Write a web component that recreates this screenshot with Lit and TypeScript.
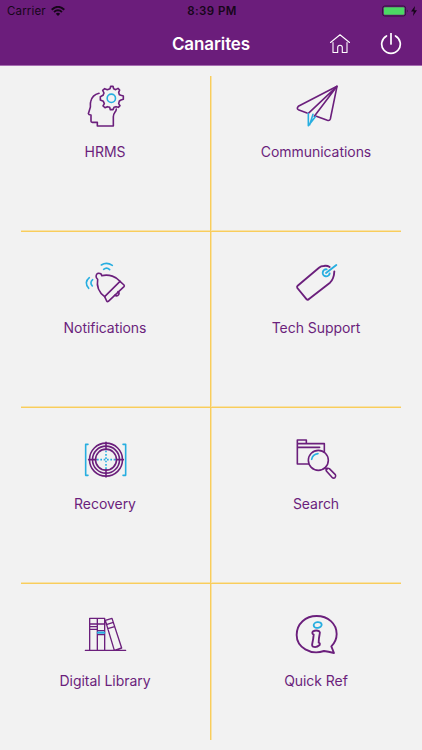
import { LitElement, html, css, svg } from "lit";
import { customElement, property } from "lit/decorators.js";

const box = (x: number, y: number) => `${x} ${y} 144 144`;

const icons: Record<string, { view: string; art: unknown }> = {
  hrms: {
    view: box(33, 18),
    art: svg`
      <path d="M87 52C74 55 65 64 62 77C60 84 62 89 61 94L55 113Q56 117 63 117V136Q63 139 67 139H82V150H130V122Q130 115 134 110Q139 105 139 99"/>
      <path d="M120 38L122 31H129L131 38L137 41L144 37L149 42L146 49L148 56L153 58L160 60V70L153 72L148 75L146 83L150 89L145 94L138 92L132 94L129 101H121L119 94L112 92L105 95L99 90L103 83L100 76L91 72V62L99 58L102 51L98 43L104 38L112 41Z"/>
      <circle class="cyan" cx="124" cy="67" r="12.5"/>`,
  },
  communications: {
    view: box(111, 18),
    art: svg`
      <path d="M156 111L130 101Q124 97 130 91L246 31L226 129Q224 135 217 133L184 121"/>
      <path d="M246 31L160 112M246 31L178 121"/>
      <path class="cyan" d="M160 113V149L181 122M164 146L174 115"/>`,
  },
  notifications: {
    view: box(63, 12),
    art: svg`
      <path d="M134 128L180 82L192 93Q194 96 192 98L145 142Q142 144 140 141Z"/>
      <path d="M134 128C118 116 109 99 113 76C106 71 107 60 114 58C121 57 125 60 125 65C148 60 169 68 180 82"/>
      <path d="M164 124Q172 128 176 122Q179 116 174 113"/>
      <path class="cyan" d="M124 33Q140 23 157 34M131 46Q140 38 149 47M88 71Q71 85 86 103M98 77Q88 86 97 96"/>`,
  },
  support: {
    view: box(81, 12),
    art: svg`
      <path class="bold" d="M194 39Q186 34 176 36Q168 36 162 41L98 95Q95 98 97 102L125 136Q128 139 132 135L195 86Q207 75 208 52"/>
      <path class="cyan bold" d="M183 57L214 33M185 46A10.500 10.500 0 1 0 194 58"/>`,
  },
  recovery: {
    view: box(33, 12),
    art: svg`
      <circle cx="108" cy="89" r="49.500"/>
      <circle cx="108" cy="89" r="40.500"/>
      <circle cx="108" cy="89" r="31.500"/>
      <path d="M56 89H78M138 89H160M108 37V59M108 119V141"/>
      <path class="cyan dash" d="M81 89H136M108 62V117"/>
      <path class="cyan" d="M54 43H47V136H54M159 43H167V136H159"/>`,
  },
  search: {
    view: box(36, 12),
    art: svg`
      <path d="M86 102H52V30H79V41H133V66M52 41H79M52 52H119"/>
      <circle cx="115" cy="91" r="30"/>
      <path class="cyan" d="M95 88Q98 73 114 71"/>
      <path d="M136 113L141 118M139 123Q136 117 142 115Q145 114 148 116L166 134Q169 139 165 143Q161 146 156 142Z"/>`,
  },
  library: {
    view: box(78, 15),
    art: svg`
      <path class="fine" d="M91 133H212M104 133V37H149V133M127 37V133M104 54H149M104 62H127M104 70H127M127 74H149M127 86H149M151 43L171 37L200 126L178 133ZM154 56L175 49M158 68L179 62"/>
      <path class="cyan" d="M129 80H147" stroke-width="7"/>`,
  },
  info: {
    view: box(36, 15),
    art: svg`
      <path class="bold" d="M154 121L162 141Q144 137 132 135C92 149 50 124 50 87C50 53 77 30 110 30C144 30 170 53 170 84Q170 105 154 121Z"/>
      <ellipse class="cyan bold" cx="113" cy="57" rx="12" ry="8.500" transform="rotate(-8 113 57)"/>
      <path class="bold" d="M99 76Q109 71 118 76Q121 79 119 84Q116 98 116 110Q121 111 119 117Q109 126 99 122Q95 120 97 112Q100 99 101 86Q94 82 99 76Z"/>`,
  },
};

@customElement("menu-tile")
class MenuTile extends LitElement {
  @property() icon = "";
  @property() label = "";

  static styles = css`
    :host { display: flex; flex-direction: column; align-items: center; }
    .icon {
      width: 48px; height: 48px; flex: none; fill: none; stroke: #6b1f7c;
      stroke-width: 4.8; stroke-linecap: round; stroke-linejoin: round;
    }
    .bold { stroke-width: 5.6; }
    .fine { stroke-width: 4; }
    .cyan { stroke: #27aee0; }
    .dash { stroke-dasharray: 5 5; stroke-linecap: butt; }
    .label {
      margin-top: 12px; font-size: 14px; line-height: 20px;
      letter-spacing: -0.05px; color: #6b1f7c; white-space: nowrap;
    }
  `;

  render() {
    const icon = icons[this.icon];
    return html`
      <svg class="icon" viewBox=${icon.view}>${icon.art}</svg>
      <span class="label">${this.label}</span>
    `;
  }
}

const tiles = [
  ["hrms", "HRMS"],
  ["communications", "Communications"],
  ["notifications", "Notifications"],
  ["support", "Tech Support"],
  ["recovery", "Recovery"],
  ["search", "Search"],
  ["library", "Digital Library"],
  ["info", "Quick Ref"],
];

@customElement("app-root")
class AppRoot extends LitElement {
  static styles = css`
    :host {
      display: flex; flex-direction: column; height: 750px; overflow: hidden;
      background: #f2f2f2; font-family: Inter, "Liberation Sans", sans-serif;
      --rule: #f9cd5c; --rule-soft: #f6e2ab;
    }
    .header {
      box-sizing: border-box; height: 66px; flex: none;
      background: #6b1d7b; border-bottom: 1px solid #a56cb0;
    }
    .status, .nav { display: grid; grid-template-columns: 1fr auto 1fr; align-items: center; }
    .status { height: 22px; padding: 0 5px 0 7px; font-size: 11.5px; color: #160619; }
    .carrier { display: flex; align-items: center; gap: 5px; letter-spacing: 0.15px; }
    .wifi { width: 14px; height: 10px; }
    .time { font-weight: 600; letter-spacing: 0.4px; }
    .power { display: flex; align-items: center; justify-content: flex-end; gap: 2px; }
    .battery { width: 27px; height: 12px; }
    .bolt { width: 6px; height: 10px; }
    .nav { height: 43px; padding: 0 20px 0 20px; color: #fff; }
    .title { grid-column: 2; font-size: 17px; font-weight: 600; letter-spacing: -0.1px; }
    .actions { display: flex; justify-content: flex-end; align-items: center; gap: 29px; }
    .action { width: 22px; height: 22px; fill: none; stroke: #fff; stroke-linecap: round; stroke-linejoin: round; }
    .grid {
      display: grid; grid-template-columns: 190px 190px;
      grid-template-rows: 156px 176px 176px 156px; margin: 10px 21px 0;
    }
    .tile {
      box-sizing: border-box; padding-top: 26px;
      border-bottom: 1px solid var(--rule); box-shadow: inset 0 -1px var(--rule-soft);
    }
    .tile:nth-child(odd) {
      border-right: 1px solid var(--rule); padding-right: 21px;
      box-shadow: 1px 0 var(--rule-soft), inset 0 -1px var(--rule-soft);
    }
    .tile:nth-child(even) { padding-left: 20px; }
    .tile:nth-child(-n + 2) { padding-top: 6px; }
    .tile:nth-child(n + 7) { padding-top: 27px; border-bottom: 0; box-shadow: none; }
    .tile:nth-child(7) { box-shadow: 1px 0 var(--rule-soft); }
  `;

  render() {
    return html`
      <header class="header">
        <div class="status">
          <span class="carrier">Carrier
            <svg class="wifi" viewBox="0 0 14 10" fill="none" stroke="#160619" stroke-width="1.9">
              <path d="M.7 3.700Q7-2 13.300 3.700M3 6Q7 2.600 11 6"/>
              <path d="M4.800 7.700Q7 6 9.200 7.700L7 10Z" fill="#160619" stroke="none"/>
            </svg>
          </span>
          <span class="time">8:39 PM</span>
          <span class="power">
            <svg class="battery" viewBox="0 0 27 12">
              <rect x=".6" y="1" width="23" height="10" rx="2.200" fill="none" stroke="#35103e"/>
              <rect x="1.800" y="2.200" width="20.600" height="7.600" rx="1" fill="#4cd964"/>
              <path d="M25 4.500Q26.500 6 25 7.500Z" fill="#35103e"/>
            </svg>
            <svg class="bolt" viewBox="0 0 6 10"><path d="M4 0L0 5.600H2.700L2 10L6 4.200H3.400Z" fill="#160619"/></svg>
          </span>
        </div>
        <div class="nav">
          <span class="title">Canarites</span>
          <span class="actions">
            <svg class="action" viewBox="0 0 22 22" stroke-width="1.1">
              <path d="M1.500 9.500L11 1.800L20.500 9.500M4 9.500V19.500H8.700V14.500Q8.700 12.300 11 12.300Q13.300 12.300 13.300 14.500V19.500H18V9.500"/>
            </svg>
            <svg class="action" viewBox="0 0 22 22" stroke-width="1.700">
              <path d="M11 .5V11M6.500 3A9.300 9.300 0 1 0 15.500 3"/>
            </svg>
          </span>
        </div>
      </header>
      <main class="grid">
        ${tiles.map(([icon, label]) => html`<menu-tile class="tile" .icon=${icon} .label=${label}></menu-tile>`)}
      </main>
    `;
  }
}
